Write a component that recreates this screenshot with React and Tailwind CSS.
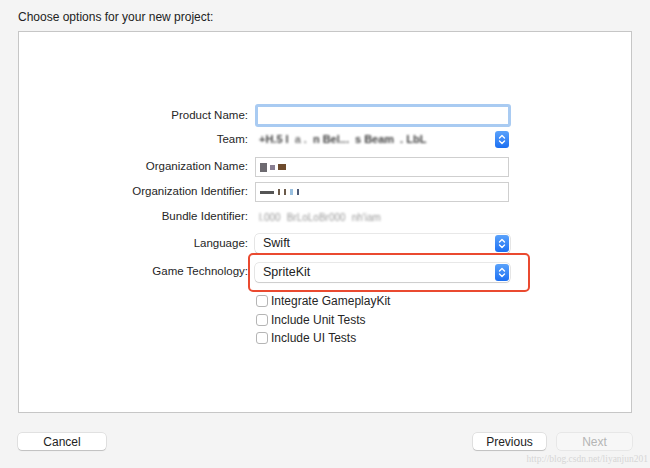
import React from "react";

const font = { fontFamily: '"Liberation Sans", Arial, sans-serif' };

function Stepper() {
  return (
    <div className="flex h-[17px] w-[14px] items-center justify-center rounded-[3px] bg-gradient-to-b from-[#5aa2fb] to-[#1b6ff2]">
      <svg width="8" height="11" viewBox="0 0 8 11" fill="none" stroke="white" strokeWidth="1.4" strokeLinecap="round" strokeLinejoin="round">
        <path d="M1.5 4 L4 1.5 L6.5 4" />
        <path d="M1.5 7 L4 9.5 L6.5 7" />
      </svg>
    </div>
  );
}

function Popup({ children }) {
  return (
    <div className="flex h-[19px] w-[255px] items-center justify-between rounded-[4px] bg-white pl-[8px] pr-[1px] shadow-[0_0_0_0.5px_rgba(0,0,0,0.18),0_1px_1px_rgba(0,0,0,0.12)]">
      <div className="text-[12.5px] text-[#222]">{children}</div>
      <Stepper />
    </div>
  );
}

function Field({ children }) {
  return (
    <div className="flex h-[20px] w-[254px] items-center border border-[#cfcfcf] bg-white pl-[4px]">
      {children}
    </div>
  );
}

function Blur({ children, className = "" }) {
  return <span className={"blur-[1.2px] " + className}>{children}</span>;
}

function Row({ label, top, children, h }) {
  return (
    <div className={"flex items-center " + top + " " + h}>
      <div className="w-[229px] text-right text-[11.5px] text-[#262626]">{label}</div>
      <div className="ml-[7px] flex items-center">{children}</div>
    </div>
  );
}

function Check({ label }) {
  return (
    <div className="flex h-[18.5px] items-center pl-[237px]">
      <div className="h-[12px] w-[12px] rounded-[3px] border border-[#b5b5b5] bg-white" />
      <span className="ml-[3px] text-[12px] text-[#262626]">{label}</span>
    </div>
  );
}

export default function App() {
  return (
    <div className="relative h-[468px] w-[650px] overflow-hidden bg-[#f4f4f4]" style={font}>
      <div className="px-[18px] pt-[9px] text-[12px] leading-[16px] text-[#222]">Choose options for your new project:</div>
      <div className="relative mx-[18px] mt-[6px] h-[382px] w-[614px] border border-[#c6c6c6] bg-white">
        <div className="flex flex-col pt-[72px]">
          <Row label="Product Name:" top="" h="h-[23px]">
            <div className="h-[23px] w-[256px] rounded-[3px] border-[3px] border-[#a9cbf2] bg-white" />
          </Row>
          <Row label="Team:" top="mt-[3px]" h="h-[19px]">
            <div className="flex h-[19px] w-[255px] items-center justify-between bg-white pl-[4px] pr-[1px]">
              <div className="flex items-center gap-[6px] text-[11px] font-bold text-[#444]">
                <Blur>+H.5 I</Blur>
                <Blur className="text-[#777]">a .</Blur>
                <Blur>n Bel...</Blur>
                <Blur>s Beam</Blur>
                <Blur>. LbL</Blur>
              </div>
              <Stepper />
            </div>
          </Row>
          <Row label="Organization Name:" top="mt-[8px]" h="h-[20px]">
            <Field>
              <div className="flex gap-[3px] items-center">
                <div className="h-[9px] w-[7px] bg-[#6d6a70] blur-[0.6px]" />
                <div className="h-[5px] w-[5px] bg-[#8a7f93] blur-[0.6px]" />
                <div className="h-[6px] w-[8px] bg-[#6e4b2e] blur-[0.6px]" />
              </div>
            </Field>
          </Row>
          <Row label="Organization Identifier:" top="mt-[5px]" h="h-[20px]">
            <Field>
              <div className="flex gap-[4px] items-center">
                <div className="h-[3px] w-[14px] bg-[#555] blur-[0.6px]" />
                <div className="h-[6px] w-[2px] bg-[#6b5a4a] blur-[0.4px]" />
                <div className="h-[6px] w-[2px] bg-[#6b5a4a] blur-[0.4px]" />
                <div className="h-[6px] w-[3px] bg-[#9ac0e0] blur-[0.4px]" />
                <div className="h-[6px] w-[2px] bg-[#4e5b77] blur-[0.4px]" />
              </div>
            </Field>
          </Row>
          <Row label="Bundle Identifier:" top="mt-[5px]" h="h-[20px]">
            <div className="flex items-center gap-[6px] pl-[4px] text-[10px] text-[#999]">
              <Blur>l.000</Blur>
              <Blur>BrLoLoBr000</Blur>
              <Blur>nh'iam</Blur>
            </div>
          </Row>
          <Row label="Language:" top="mt-[7px]" h="h-[19px]">
            <Popup>Swift</Popup>
          </Row>
          <Row label="Game Technology:" top="mt-[9px]" h="h-[20px]">
            <Popup>SpriteKit</Popup>
          </Row>
          <div className="mt-[10px] flex flex-col">
            <Check label="Integrate GameplayKit" />
            <Check label="Include Unit Tests" />
            <Check label="Include UI Tests" />
          </div>
        </div>
        <div className="absolute left-[229px] top-[221px] h-[39px] w-[282px] rounded-[5px] border-2 border-[#ea4a30]" />
      </div>
      <div className="mt-[20px] flex items-center justify-between px-[18px]">
        <button className="h-[17px] w-[88px] rounded-[4px] bg-white text-[12px] text-[#222] shadow-[0_0_0_0.5px_rgba(0,0,0,0.15),0_1px_1px_rgba(0,0,0,0.15)]">Cancel</button>
        <div className="flex items-center gap-[11px]">
          <button className="h-[17px] w-[73px] rounded-[4px] bg-white text-[12px] text-[#222] shadow-[0_0_0_0.5px_rgba(0,0,0,0.15),0_1px_1px_rgba(0,0,0,0.15)]">Previous</button>
          <button className="h-[17px] w-[75px] rounded-[4px] bg-[#f7f7f7] text-[12px] text-[#b5b5b5] shadow-[0_0_0_0.5px_rgba(0,0,0,0.1)]">Next</button>
        </div>
      </div>
      <div className="absolute right-[2px] top-[452px] text-[9.5px] text-[#d6d6d6]" style={{ fontFamily: '"Liberation Serif", serif' }}>http://blog.csdn.net/liyanjun201</div>
    </div>
  );
}
